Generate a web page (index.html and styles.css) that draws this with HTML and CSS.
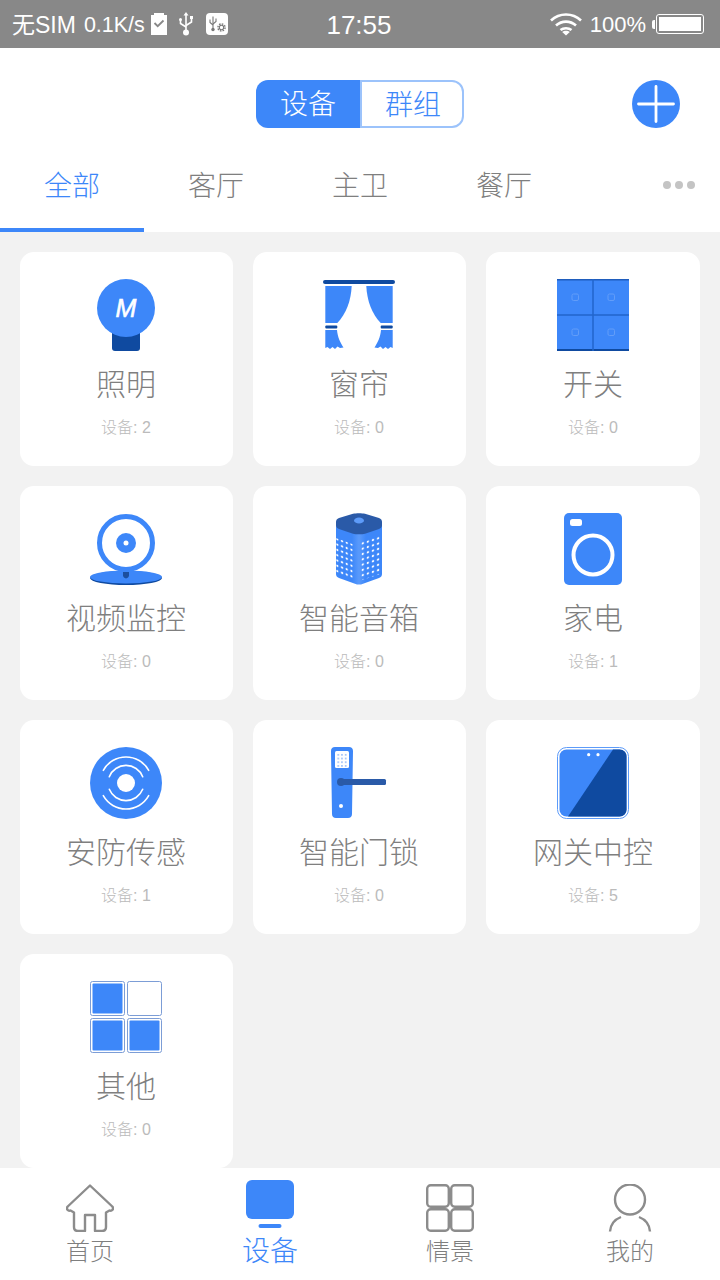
FILE: index.html
```html
<!DOCTYPE html>
<html lang="zh-CN">
<head>
    <meta charset="UTF-8">
    <meta name="viewport" content="width=device-width, initial-scale=1.0">
    <title>设备</title>
    <link rel="stylesheet" href="styles.css">
</head>
<body>
<div class="page">
    <div class="status-bar">
        <div class="status-left">
            <span class="status-sim">无SIM</span>
            <span class="status-speed">0.1K/s</span>
            <svg class="status-clip" width="16" height="22" viewBox="0 0 16 22"><path d="M0 2h3V0h10v2h3v20H0z" fill="#fff"/><path d="M3.5 10l3.2 3.2L12.5 7.5" fill="none" stroke="#888" stroke-width="1.8"/></svg>
            <svg class="status-usb" width="14" height="24" viewBox="0 0 14 24"><g fill="none" stroke="#fff" stroke-width="1.6"><path d="M7 2v18"/><path d="M1.5 8v3.5L7 15"/><path d="M12.5 6v4L7 13.5"/></g><path d="M7 0l2.5 3.5h-5z" fill="#fff"/><circle cx="7" cy="20.5" r="3" fill="#fff"/><circle cx="1.5" cy="7.5" r="1.5" fill="#fff"/><rect x="11" y="4" width="3" height="3" fill="#fff"/></svg>
            <svg class="status-debug" width="22" height="22" viewBox="0 0 22 22"><rect width="22" height="22" rx="4" fill="#fff"/><g fill="none" stroke="#777" stroke-width="1.1"><path d="M7 3.5v13"/><path d="M4 6.5v3l3 2.5"/><path d="M10 5.5v3l-3 2.5"/><circle cx="15.5" cy="14.5" r="2.2"/><circle cx="15.5" cy="14.5" r="3.6" stroke-width="1.4" stroke-dasharray="1.600 1.200"/></g><circle cx="7" cy="16.5" r="1.7" fill="#777"/></svg>
        </div>
        <div class="status-time">17:55</div>
        <div class="status-right">
            <svg width="32" height="24" viewBox="0 0 32 24"><g fill="none" stroke="#fff" stroke-width="2.6"><path d="M1 8.5c8.5-8 21.5-8 30 0"/><path d="M6 13.5c5.8-5.2 14.2-5.2 20 0"/><path d="M10.5 18c3-2.4 8-2.4 11 0"/></g><path d="M16 23.5l-3.8-3.6c2-1.6 5.600-1.600 7.600 0z" fill="#fff"/></svg>
            <span class="status-pct">100%</span>
            <div class="battery"><div class="battery-nub"></div><div class="battery-body"><div class="battery-fill"></div></div></div>
        </div>
    </div>

    <div class="top-panel">
        <div class="top-row">
            <div class="segment">
                <div class="segment-item active">设备</div>
                <div class="segment-item">群组</div>
            </div>
            <svg class="add-btn" width="48" height="48" viewBox="0 0 48 48"><circle cx="24" cy="24" r="24" fill="#3d87f9"/><path d="M6.500 24h35M24 6.500v35" stroke="#fff" stroke-width="2.800" stroke-linecap="round"/></svg>
        </div>
        <div class="tabs">
            <div class="tab active">全部</div>
            <div class="tab">客厅</div>
            <div class="tab">主卫</div>
            <div class="tab">餐厅</div>
            <div class="tab-more"><span></span><span></span><span></span></div>
        </div>
    </div>

    <div class="grid">
        <div class="card">
            <svg class="icon" viewBox="0 0 72 72"><rect x="22" y="44" width="28" height="28" rx="3" fill="#0f4aa0"/><circle cx="36" cy="29" r="29" fill="#3d87f9"/><text x="36" y="38" class="icon-letter">M</text></svg>
            <div class="name">照明</div>
            <div class="count">设备: 2</div>
        </div>
        <div class="card">
            <svg class="icon" viewBox="0 0 72 72">
                <rect x="0" y="1" width="72" height="4" rx="2" fill="#0f4aa0"/>
                <g>
                    <path d="M2.300 7H28.700C28 22 23 35 14.300 44H2.300z" fill="#3d87f9"/>
                    <rect x="2.300" y="46.500" width="12" height="3" rx="1" fill="#0f4aa0"/>
                    <path d="M2.300 51H14C14.500 58 17.500 64 20.500 68.500L17 69L14.500 67.500L12 70L9.500 68L7 70L4.500 68L2.300 69z" fill="#3d87f9"/>
                </g>
                <g transform="matrix(-1 0 0 1 72 0)">
                    <path d="M2.300 7H28.700C28 22 23 35 14.300 44H2.300z" fill="#3d87f9"/>
                    <rect x="2.300" y="46.500" width="12" height="3" rx="1" fill="#0f4aa0"/>
                    <path d="M2.300 51H14C14.500 58 17.500 64 20.500 68.500L17 69L14.500 67.500L12 70L9.500 68L7 70L4.500 68L2.300 69z" fill="#3d87f9"/>
                </g>
            </svg>
            <div class="name">窗帘</div>
            <div class="count">设备: 0</div>
        </div>
        <div class="card">
            <svg class="icon" viewBox="0 0 72 72">
                <rect width="72" height="72" fill="#3d87f9"/>
                <rect width="72" height="1.500" fill="#1f5dbd"/><rect y="70" width="72" height="2" fill="#0f4aa0"/>
                <path d="M36 0v72M0 36h72" stroke="#2265cc" stroke-width="1.500"/>
                <g fill="none" stroke="#629df9" stroke-width="1"><rect x="15" y="15" width="6.500" height="6.500" rx="1.500"/><rect x="51" y="15" width="6.500" height="6.500" rx="1.500"/><rect x="15" y="50" width="6.500" height="6.500" rx="1.500"/><rect x="51" y="50" width="6.500" height="6.500" rx="1.500"/></g>
            </svg>
            <div class="name">开关</div>
            <div class="count">设备: 0</div>
        </div>

        <div class="card">
            <svg class="icon" viewBox="0 0 72 72">
                <circle cx="36" cy="30" r="26.500" fill="#fff" stroke="#3d87f9" stroke-width="5"/>
                <circle cx="36" cy="30" r="10" fill="#3d87f9"/><circle cx="36" cy="30" r="2.500" fill="#fff"/>
                <ellipse cx="36" cy="65" rx="36" ry="7" fill="#0f4aa0"/>
                <ellipse cx="36" cy="64" rx="36" ry="6.500" fill="#3d87f9"/>
                <path d="M33 59h6v3.500c0 1.500-1.500 2.500-3 3-1.500-.5-3-1.500-3-3z" fill="#1c4f9e"/>
            </svg>
            <div class="name">视频监控</div>
            <div class="count">设备: 0</div>
        </div>
        <div class="card">
            <svg class="icon" viewBox="0 0 72 72">
                <defs>
                    <pattern id="dots-left" width="4.700" height="5.300" patternUnits="userSpaceOnUse" patternTransform="translate(12 22.850) skewY(20)"><circle cx="2.350" cy="2.600" r="1.150" fill="#fff"/></pattern>
                    <pattern id="dots-right" width="5.100" height="5.300" patternUnits="userSpaceOnUse" patternTransform="translate(37.200 28.500) skewY(-18)"><circle cx="2.550" cy="2.600" r="1.150" fill="#fff"/></pattern>
                    <linearGradient id="speaker-body" x1="0" y1="0" x2="1" y2="0"><stop offset="0" stop-color="#3d87f9"/><stop offset=".35" stop-color="#3d87f9"/><stop offset=".5" stop-color="#5a9afb"/><stop offset=".65" stop-color="#3d87f9"/><stop offset="1" stop-color="#3d87f9"/></linearGradient>
                </defs>
                <path d="M13 9H59V61C59 63 58 64 56 65L38 71.500H34L16 65C14 64 13 63 13 61z" fill="url(#speaker-body)"/>
                <path d="M16 5L30 .7C33 0 39 0 42 .7L56 5C58 5.800 59 7 59 9V12C59 14 58 15 56 16L42 20.800C39 21.500 33 21.500 30 20.800L16 16C14 15 13 14 13 12V9C13 7 14 5.800 16 5z" fill="#2a5aa8"/>
                <ellipse cx="36" cy="7.500" rx="5" ry="3" fill="#5d9bf9"/>
                <path d="M12 24.500L31 31.500V67L12 60.500z" fill="url(#dots-left)"/>
                <path d="M37.200 29L57.600 22.500V61L37.200 67.500z" fill="url(#dots-right)"/>
            </svg>
            <div class="name">智能音箱</div>
            <div class="count">设备: 0</div>
        </div>
        <div class="card">
            <svg class="icon" viewBox="0 0 72 72">
                <rect x="7" y="0" width="58" height="72" rx="5" fill="#3d87f9"/>
                <rect x="13" y="6" width="12" height="7" rx="2.500" fill="#fff"/>
                <circle cx="36" cy="42" r="19.500" fill="none" stroke="#fff" stroke-width="4"/>
            </svg>
            <div class="name">家电</div>
            <div class="count">设备: 1</div>
        </div>

        <div class="card">
            <svg class="icon" viewBox="0 0 72 72">
                <circle cx="36" cy="36" r="36" fill="#3d87f9"/>
                <circle cx="36" cy="36" r="9" fill="#fff"/>
                <g fill="none" stroke="#fff" stroke-width="1.600" stroke-linecap="round">
                    <path d="M13.300 23.300A26 26 0 0 1 58.700 23.300"/>
                    <path d="M19.300 29.700A18 18 0 0 1 52.700 29.700"/>
                    <path d="M19.300 42.300A18 18 0 0 0 52.700 42.300"/>
                    <path d="M13.300 48.700A26 26 0 0 0 58.700 48.700"/>
                </g>
            </svg>
            <div class="name">安防传感</div>
            <div class="count">设备: 1</div>
        </div>
        <div class="card">
            <svg class="icon" viewBox="0 0 72 72">
                <defs>
                    <pattern id="keypad" x="13.500" y="6" width="3.700" height="3.700" patternUnits="userSpaceOnUse"><circle cx="1.800" cy="1.800" r=".8" fill="#7aa9f5"/></pattern>
                </defs>
                <path d="M12 0H26C28.500 0 30 1.500 30 4L29 67C29 69.500 27.500 71 25 71H13C10.500 71 9 69.500 9 67L8 4C8 1.500 9.500 0 12 0z" fill="#3d87f9"/>
                <rect x="12" y="4" width="14" height="17" rx="1.500" fill="#fff"/>
                <rect x="13.500" y="6" width="11" height="14" fill="url(#keypad)"/>
                <circle cx="18" cy="35" r="4" fill="#2a5aa8"/>
                <rect x="18" y="32" width="45" height="6" rx="1.500" fill="#2a5aa8"/>
                <circle cx="18" cy="59" r="2" fill="#fff"/>
            </svg>
            <div class="name">智能门锁</div>
            <div class="count">设备: 0</div>
        </div>
        <div class="card">
            <svg class="icon" viewBox="0 0 72 72">
                <rect x=".5" y=".5" width="71" height="71" rx="9" fill="#fff" stroke="#5d9bf9"/>
                <rect x="2.500" y="2.500" width="67" height="67" rx="7" fill="#3d87f9"/>
                <path d="M56 2.500H62.500C66.500 2.500 69.500 5.500 69.500 9.500V62.500C69.500 66.500 66.500 69.500 62.500 69.500H11z" fill="#0f4aa0"/>
                <circle cx="31.700" cy="7.700" r="1.600" fill="#fff"/><circle cx="41" cy="7.700" r="1.600" fill="#fff"/>
            </svg>
            <div class="name">网关中控</div>
            <div class="count">设备: 5</div>
        </div>

        <div class="card">
            <svg class="icon" viewBox="0 0 72 72">
                <g fill="#fff" stroke="#7c9dd6" stroke-width="1">
                    <rect x=".5" y=".5" width="34" height="34" rx="2"/>
                    <rect x="37.500" y=".5" width="34" height="34" rx="2"/>
                    <rect x=".5" y="37.500" width="34" height="34" rx="2"/>
                    <rect x="37.500" y="37.500" width="34" height="34" rx="2"/>
                </g>
                <g fill="#3d87f9">
                    <rect x="2.500" y="2.500" width="30" height="30" rx="1"/>
                    <rect x="2.500" y="39.500" width="30" height="30" rx="1"/>
                    <rect x="39.500" y="39.500" width="30" height="30" rx="1"/>
                </g>
            </svg>
            <div class="name">其他</div>
            <div class="count">设备: 0</div>
        </div>
    </div>

    <div class="nav">
        <div class="nav-item">
            <svg class="nav-icon" viewBox="0 0 48 48"><path d="M24 1.500L1.700 22.500C-.3 25 2.300 27.500 4.500 26.500L8 28.500V43C8 45.500 9.500 47 12 47H19V31H29V47H36C38.500 47 40 45.500 40 43V28.500L43.500 26.500C45.700 27.500 48.300 25 46.300 22.500z" fill="none" stroke="#8c8c8c" stroke-width="2.400" stroke-linejoin="round"/></svg>
            <div class="nav-label">首页</div>
        </div>
        <div class="nav-item active">
            <svg class="nav-icon" viewBox="0 0 48 48"><rect x="0" y="0" width="48" height="39" rx="6" fill="#3d87f9"/><rect x="12.500" y="44" width="23" height="4" rx="2" fill="#3d87f9"/></svg>
            <div class="nav-label">设备</div>
        </div>
        <div class="nav-item">
            <svg class="nav-icon" viewBox="0 0 48 48"><g fill="none" stroke="#8c8c8c" stroke-width="2.400"><rect x="1.200" y="1.200" width="21.600" height="21.600" rx="3.500"/><rect x="25.200" y="1.200" width="21.600" height="21.600" rx="3.500"/><rect x="1.200" y="25.200" width="21.600" height="21.600" rx="3.500"/><rect x="25.200" y="25.200" width="21.600" height="21.600" rx="3.500"/></g></svg>
            <div class="nav-label">情景</div>
        </div>
        <div class="nav-item">
            <svg class="nav-icon" viewBox="0 0 48 48"><g fill="none" stroke="#8c8c8c" stroke-width="2.400"><circle cx="24" cy="15.500" r="15"/><path d="M4 47.500C4.500 41 8.500 35.500 15 33"/><path d="M33 33C39.500 35.500 43.500 41 44 47.500"/></g></svg>
            <div class="nav-label">我的</div>
        </div>
    </div>
</div>
</body>
</html>
```

FILE: styles.css
```css
* {
    box-sizing: border-box;
}

body {
    margin: 0;
    font-family: "Liberation Sans", "Noto Sans CJK SC", sans-serif;
    font-weight: 300;
    background-color: #f2f2f2;
}

.page {
    width: 720px;
    height: 1280px;
    display: flex;
    flex-direction: column;
    overflow: hidden;
}

/* status bar */
.status-bar {
    height: 48px;
    padding: 2px 16px 0 12px;
    display: grid;
    grid-template-columns: 1fr auto 1fr;
    align-items: center;
    background-color: #888;
    color: #fff;
    font-size: 23px;
    font-weight: 400;
    line-height: 30px;
}

.status-left {
    display: flex;
    align-items: center;
}

.status-left svg,
.status-right svg {
    margin-top: -2px;
}

.status-speed {
    margin-left: 8px;
    font-size: 21.5px;
}

.status-clip {
    margin-left: 6px;
}

.status-usb {
    margin-left: 12px;
}

.status-debug {
    margin-left: 13px;
}

.status-time {
    margin-left: 2px;
    font-size: 26px;
}

.status-right {
    display: flex;
    align-items: center;
    justify-content: flex-end;
}

.status-pct {
    margin-left: 8px;
    font-size: 22px;
}

.battery {
    margin-left: 6px;
    margin-top: -2px;
    display: flex;
    align-items: center;
}

.battery-nub {
    width: 3px;
    height: 9px;
    background-color: #fff;
    border-radius: 2px 0 0 2px;
    margin-right: 1px;
}

.battery-body {
    width: 48px;
    height: 20px;
    padding: 2px;
    border: 1px solid #fff;
    border-radius: 3px;
}

.battery-fill {
    height: 100%;
    background-color: #fff;
}

/* header */
.top-panel {
    background-color: #fff;
}

.top-row {
    height: 100px;
    padding-top: 32px;
    position: relative;
    display: flex;
    justify-content: center;
    align-items: flex-start;
}

.segment {
    display: flex;
    width: 208px;
    height: 48px;
}

.segment-item {
    width: 104px;
    height: 48px;
    padding-left: 2px;
    line-height: 48px;
    text-align: center;
    font-size: 28px;
    color: #3d87f9;
    border: 2px solid #9cc3fb;
    border-radius: 0 12px 12px 0;
}

.segment-item.active {
    padding-left: 0;
    line-height: 50px;
    color: #fff;
    background-color: #3d87f9;
    border: none;
    border-radius: 12px 0 0 12px;
}

.add-btn {
    position: absolute;
    top: 32px;
    right: 40px;
}

.tabs {
    display: flex;
    height: 84px;
}

.tab {
    width: 144px;
    padding-top: 21px;
    line-height: 36px;
    text-align: center;
    font-size: 28px;
    color: #7f7f7f;
}

.tab.active {
    color: #3d87f9;
    border-bottom: 4px solid #3d87f9;
}

.tab-more {
    flex: 1;
    display: flex;
    justify-content: center;
    gap: 4px;
    padding-top: 33px;
    padding-left: 62px;
}

.tab-more span {
    width: 8px;
    height: 8px;
    border-radius: 50%;
    background-color: #c4c4c4;
}

/* device cards */
.grid {
    flex: 1;
    min-height: 0;
    padding: 20px;
    display: grid;
    grid-template-columns: 213px 213px 214px;
    grid-auto-rows: 214px;
    gap: 20px;
}

.card {
    padding-top: 27px;
    display: flex;
    flex-direction: column;
    align-items: center;
    background-color: #fff;
    border-radius: 14px;
}

/* first two columns are 213px wide, keep their content on whole pixels */
.card:not(:nth-child(3n)) {
    padding-right: 1px;
}

.icon {
    width: 72px;
    height: 72px;
    flex: none;
}

.icon-letter {
    font-family: "Liberation Sans", sans-serif;
    font-size: 25px;
    font-style: italic;
    text-anchor: middle;
    fill: #fff;
    stroke: #fff;
    stroke-width: .6px;
}

.name {
    margin-top: 14px;
    line-height: 40px;
    font-size: 30px;
    color: #7f7f7f;
}

.count {
    margin-top: 13px;
    line-height: 20px;
    font-size: 16px;
    color: #bbb;
}

/* bottom nav */
.nav {
    height: 112px;
    flex: none;
    display: flex;
    background-color: #fff;
}

.nav-item {
    width: 180px;
    padding-top: 16px;
    display: flex;
    flex-direction: column;
    align-items: center;
}

.nav-icon {
    width: 48px;
    height: 48px;
    flex: none;
}

.nav-label {
    margin-top: 2px;
    line-height: 36px;
    font-size: 24px;
    color: #7f7f7f;
}

.nav-item.active {
    padding-top: 12px;
}

.nav-item.active .nav-label {
    margin-top: 2px;
    line-height: 44px;
    font-size: 28px;
    color: #3d87f9;
}
```
